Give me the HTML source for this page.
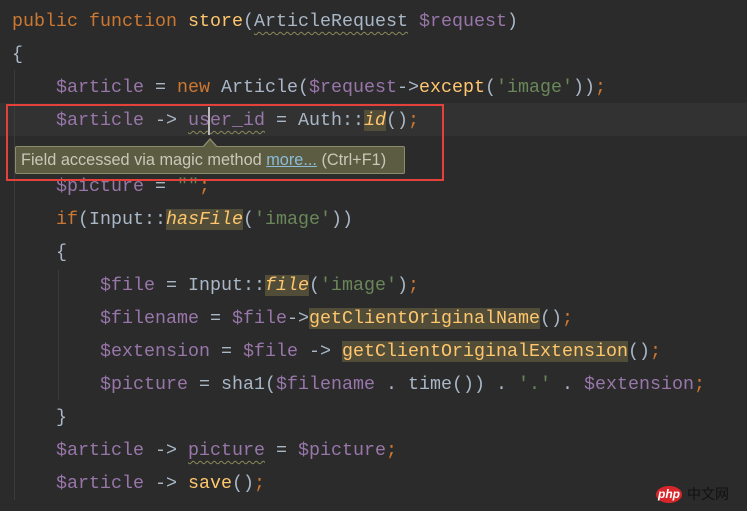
<!DOCTYPE html><html><head><meta charset="utf-8"><style>
body{margin:0;width:747px;height:511px;background:#2b2b2b;overflow:hidden;position:relative;font-family:"Liberation Mono",monospace;font-size:18.33px;color:#a9b7c6}
.l{position:absolute;left:12px;height:33px;line-height:33px;white-space:pre}
.k{color:#cc7832}.v{color:#9876aa}.s{color:#6a8759}.f{color:#ffc66d}.i{font-style:italic;color:#ffc66d}
.h{background:#524d38}
.w{text-decoration:underline wavy #8a8a5a;text-decoration-thickness:1px;text-underline-offset:5px}
</style></head><body>
<div style="position:absolute;left:0;top:103px;width:747px;height:33px;background:#323232"></div>
<div style="position:absolute;left:14px;top:70px;width:1px;height:430px;background:#3b3b3b"></div>
<div style="position:absolute;left:58px;top:270px;width:1px;height:130px;background:#3b3b3b"></div>
<div class="l" style="top:5px"><span class="k">public function </span><span class="f">store</span>(<span class="w">ArticleRequest</span> <span class="v">$request</span>)</div>
<div class="l" style="top:38px">{</div>
<div class="l" style="top:71px">    <span class="v">$article</span> = <span class="k">new </span>Article(<span class="v">$request</span>-&gt;<span class="f">except</span>(<span class="s">'image'</span>))<span class="k">;</span></div>
<div class="l" style="top:104px">    <span class="v">$article</span> -&gt; <span class="v w">user_id</span> = Auth::<span class="i h">id</span>()<span class="k">;</span></div>
<div class="l" style="top:170px">    <span class="v">$picture</span> = <span class="s">""</span><span class="k">;</span></div>
<div class="l" style="top:203px">    <span class="k">if</span>(Input::<span class="i h">hasFile</span>(<span class="s">'image'</span>))</div>
<div class="l" style="top:236px">    {</div>
<div class="l" style="top:269px">        <span class="v">$file</span> = Input::<span class="i h">file</span>(<span class="s">'image'</span>)<span class="k">;</span></div>
<div class="l" style="top:302px">        <span class="v">$filename</span> = <span class="v">$file</span>-&gt;<span class="f h">getClientOriginalName</span>()<span class="k">;</span></div>
<div class="l" style="top:335px">        <span class="v">$extension</span> = <span class="v">$file</span> -&gt; <span class="f h">getClientOriginalExtension</span>()<span class="k">;</span></div>
<div class="l" style="top:368px">        <span class="v">$picture</span> = sha1(<span class="v">$filename</span> . time()) . <span class="s">'.'</span> . <span class="v">$extension</span><span class="k">;</span></div>
<div class="l" style="top:401px">    }</div>
<div class="l" style="top:434px">    <span class="v">$article</span> -&gt; <span class="v w">picture</span> = <span class="v">$picture</span><span class="k">;</span></div>
<div class="l" style="top:467px">    <span class="v">$article</span> -&gt; <span class="f">save</span>()<span class="k">;</span></div>
<div style="position:absolute;left:208px;top:107px;width:2px;height:28px;background:#bbb"></div>
<div style="position:absolute;left:15px;top:146px;width:390px;height:28px;background:#5c5c42;border:1px solid #8c8c6a;border-radius:2px;box-sizing:border-box;font-family:'Liberation Sans',sans-serif;font-size:16.3px;line-height:26px;padding-left:5px;color:#c8c8b8;white-space:nowrap">Field accessed via magic method <span style="color:#8bbcd8;text-decoration:underline">more...</span> (Ctrl+F1)</div>
<div style="position:absolute;left:202px;top:138px;width:0;height:0;border-left:8px solid transparent;border-right:8px solid transparent;border-bottom:9px solid #8c8c6a"></div>
<div style="position:absolute;left:203px;top:140px;width:0;height:0;border-left:7px solid transparent;border-right:7px solid transparent;border-bottom:8px solid #5c5c42"></div>
<div style="position:absolute;left:6px;top:104px;width:438px;height:77px;border:2px solid #e5413b;box-sizing:border-box"></div>
<div style="position:absolute;left:656px;top:486px;width:26px;height:17px;border-radius:50%;background:#d9262a;color:#fff;font-family:'Liberation Sans',sans-serif;font-style:italic;font-weight:bold;font-size:12px;line-height:17px;text-align:center">php</div>
<div style="position:absolute;left:687px;top:485px;font-family:'Noto Sans CJK SC',sans-serif;font-size:14px;color:#111;line-height:18px">中文网</div>
</body></html>
